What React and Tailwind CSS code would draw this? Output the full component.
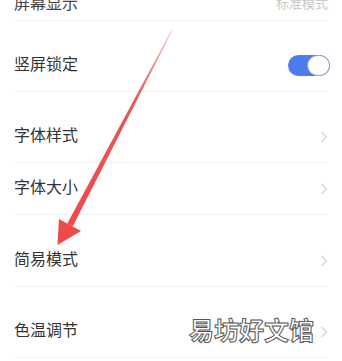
import React from "react";

const Chevron = () => (
  <svg width="8" height="12" viewBox="0 0 8 12" className="mr-[14px]">
    <path d="M1.5 1 L6.5 6 L1.5 11" fill="none" stroke="#d4d4d4" strokeWidth="1.3" />
  </svg>
);

const Toggle = () => (
  <div className="mr-[12px] flex h-[21px] w-[42px] items-center justify-end rounded-full bg-[#4d7cf0]">
    <div className="h-[21px] w-[23px] rounded-full border border-[#9aa3b5] bg-white" />
  </div>
);

const Row = ({ label, top, right }) => (
  <div className={`${top} border-b border-[#f1f1f1] mx-[14px]`}>
    <div className="flex h-[51px] items-center justify-between -mr-[14px]">
      <span className="mb-[6px] text-[16px] text-[#333]">{label}</span>
      {right}
    </div>
  </div>
);

const Arrow = () => (
  <svg className="pointer-events-none absolute left-0 top-0" width="342" height="361">
    <defs>
      <linearGradient id="ar" x1="172" y1="30" x2="70" y2="225" gradientUnits="userSpaceOnUse">
        <stop offset="0" stopColor="#f3c7c4" />
        <stop offset="0.35" stopColor="#e65a55" />
        <stop offset="1" stopColor="#ef4a4a" />
      </linearGradient>
    </defs>
    <polygon points="171.6,30 172.4,30.4 72.7,226.4 67.3,223.6" fill="url(#ar)" />
    <polygon points="57.5,245 59,219 81,231" fill="#ef4a4a" />
  </svg>
);

export default function App() {
  return (
    <div className="relative h-[361px] w-[342px] overflow-hidden bg-white font-['Noto_Sans_CJK_SC',sans-serif]">
      {/* cut-off row at the top */}
      <div className="mx-[14px] flex h-[21px] items-end justify-between border-b border-[#f1f1f1]">
        <span className="mb-[10px] text-[16px] leading-none text-[#444]">屏幕显示</span>
        <span className="mb-[11px] text-[13px] leading-none text-[#c8c8c8]">标准模式</span>
      </div>
      <Row label="竖屏锁定" top="pt-[19px]" right={<Toggle />} />
      <Row label="字体样式" top="pt-[19px]" right={<Chevron />} />
      <Row label="字体大小" top="pt-0" right={<Chevron />} />
      <Row label="简易模式" top="pt-[20px]" right={<Chevron />} />
      <Row
        label="色温调节"
        top="pt-[19px]"
        right={
          <div className="flex items-center">
            <span className="mr-[6px] mb-[4px] text-[25px] font-bold leading-none text-white [-webkit-text-stroke:1px_#555]">
              易坊好文馆
            </span>
            <Chevron />
          </div>
        }
      />
      <Arrow />
    </div>
  );
}
